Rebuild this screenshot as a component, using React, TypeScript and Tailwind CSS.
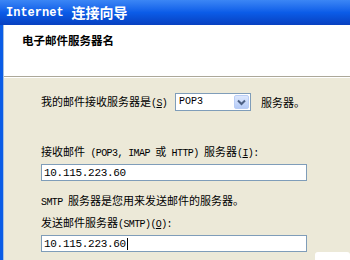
const cjk = { fontFamily: '"Noto Sans CJK SC", sans-serif' };
const mono = { fontFamily: '"Liberation Mono", "DejaVu Sans Mono", monospace' };

function L({ children }: { children: React.ReactNode }) {
  return (
    <span className="text-[10px] tracking-[-0.6px] whitespace-pre" style={mono}>
      {children}
    </span>
  );
}

function ComboArrow() {
  return (
    <div className="flex h-full w-[15px] items-center justify-center rounded-[2px] border border-[#b9cdf5] bg-gradient-to-b from-[#dde8fd] to-[#b5cbf7]">
      <svg width="9" height="7" viewBox="0 0 9 7">
        <path d="M1 1.5 L4.5 5 L8 1.5" fill="none" stroke="#4d6185" strokeWidth="2" />
      </svg>
    </div>
  );
}

export default function App() {
  return (
    <div className="flex h-[260px] w-[350px] flex-col overflow-hidden bg-[#ece9d8] text-black">
      {/* Title bar */}
      <div className="flex h-[25px] shrink-0 items-center bg-gradient-to-b from-[#3b86f5] via-[#0b5ce8] to-[#0840c0] px-[6px] text-white">
        <span className="text-[12px] font-bold" style={mono}>Internet</span>
        <span className="ml-[8px] text-[14px] font-bold" style={cjk}>连接向导</span>
      </div>

      <div className="flex flex-1 border-l-[3px] border-[#0a5ce6]">
        <div className="flex flex-1 flex-col border-l border-[#3d84f0]/40">
          {/* Header */}
          <div className="h-[51px] shrink-0 bg-white pl-[18px] pt-[8px]">
            <div className="text-[11.5px] font-bold leading-[14px]" style={cjk}>电子邮件服务器名</div>
          </div>
          <div className="h-px bg-[#aca899]" />
          <div className="h-px bg-white" />

          {/* Body */}
          <div className="flex flex-1 flex-col pl-[37px] text-[11px] leading-[14px]" style={cjk}>
            <div className="mt-[15px] flex h-[18px] items-center">
              <span className="w-[134px]">
                我的邮件接收服务器是<L>(<span className="underline">S</span>)</L>
              </span>
              <div className="flex h-[18px] w-[76px] items-center border border-[#7f9db9] bg-white pl-[3px] pr-[1px]">
                <span className="flex-1 text-[10px]" style={mono}>POP3</span>
                <div className="h-[14px]"><ComboArrow /></div>
              </div>
              <span className="ml-[10px]">服务器。</span>
            </div>

            <div className="mt-[33px]">
              接收邮件<L> (POP3, IMAP </L>或<L> HTTP) </L>服务器<L>(<span className="underline">I</span>):</L>
            </div>
            <div className="mt-[3px] flex h-[17px] w-[266px] items-center border border-[#7f9db9] bg-white pl-[2px] text-[11px] tracking-[-0.3px]" style={mono}>
              10.115.223.60
            </div>

            <div className="mt-[12px]">
              <L>SMTP </L>服务器是您用来发送邮件的服务器。
            </div>
            <div className="mt-[5px]">
              发送邮件服务器<L>(SMTP)(<span className="underline">O</span>):</L>
            </div>
            <div className="mt-[3px] flex h-[17px] w-[266px] items-center border border-[#7f9db9] bg-white pl-[2px] text-[11px] tracking-[-0.3px]" style={mono}>
              10.115.223.60<span className="ml-px h-[12px] w-px bg-black" />
            </div>

            <div className="mt-auto flex justify-end">
              <div className="h-[10px] w-[35px] rounded-t-[3px] bg-white" />
            </div>
          </div>
        </div>
      </div>
    </div>
  );
}
